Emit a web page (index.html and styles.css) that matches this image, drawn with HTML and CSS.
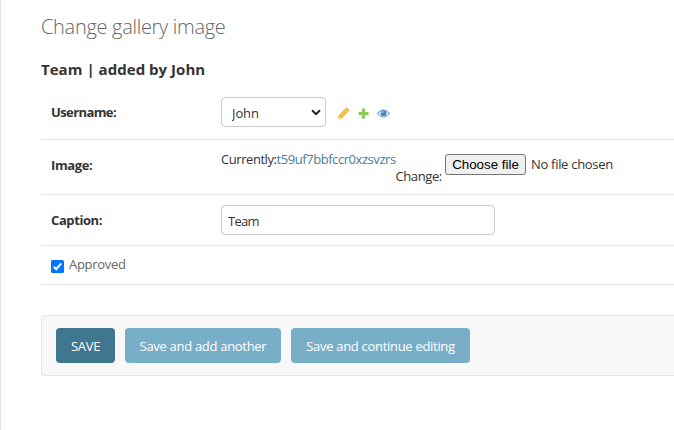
FILE: index.html
```html
<!DOCTYPE html>
<html lang="en">
<head>
<meta charset="utf-8">
<title>Change gallery image</title>
<link rel="stylesheet" href="styles.css">
</head>
<body>
<main class="content">
  <h1>Change gallery image</h1>
  <h2>Team | added by John</h2>
  <form>
    <div class="row row-user">
      <label class="name" for="user">Username:</label>
      <div class="select-box">
        <select id="user"><option>John</option></select>
        <svg class="arrow" width="10" height="7" viewBox="0 0 10 7"><path d="M1 1.2 5 5.2 9 1.2" fill="none" stroke="#222" stroke-width="2"/></svg>
      </div>
      <div class="related">
        <svg width="13" height="13" viewBox="0 0 13 13"><path d="M.8 12.200 1.800 8 8.600 1.300Q9.800.3 10.900 1.300L11.800 2.200Q12.700 3.200 11.700 4.300L5 11.100Z" fill="#efb83c"/><path d="M3.800 8.800 9 3.600" stroke="#f8d88a" stroke-width=".9"/><path d="M8.200 2.500 10.600 4.900" stroke="#fbe8bb" stroke-width=".7"/><path d="M2 10 3.100 11" stroke="#fff" stroke-width="1"/></svg>
        <svg width="13" height="13" viewBox="0 0 13 13"><path d="M5 1.500H8V5H11.500V8H8V11.500H5V8H1.500V5H5Z" fill="#8acb55"/></svg>
        <svg width="13" height="13" viewBox="0 0 13 13"><path d="M.5 6.500Q6.500-.5 12.500 6.500Q6.500 13.500.5 6.500Z" fill="#fff" stroke="#6a9bd0" stroke-width="1.100"/><circle cx="6.500" cy="6.200" r="3" fill="#4a85c8"/><path d="M5 6Q5 4.700 6.500 4.700" fill="none" stroke="#fff" stroke-width=".8"/></svg>
      </div>
    </div>
    <div class="row row-image">
      <span class="name">Image:</span>
      <div class="file">
        <span class="current">Currently:<a href="#">t59uf7bbfccr0xzsvzrs</a></span>
        <span class="change">Change:</span>
        <button type="button" class="choose">Choose file</button>
        <span class="none">No file chosen</span>
      </div>
    </div>
    <div class="row row-caption">
      <label class="name" for="caption">Caption:</label>
      <input id="caption" class="text" type="text" value="Team">
    </div>
    <div class="row row-approved">
      <svg class="check" width="13" height="13" viewBox="0 0 13 13"><rect width="13" height="13" rx="1.500" fill="#0075ff"/><path d="M2.800 6.800 5.200 9.200 10.200 3.300" fill="none" stroke="#fff" stroke-width="2"/></svg>
      <span class="approved">Approved</span>
    </div>
    <div class="submit">
      <button type="button" class="btn save">SAVE</button>
      <button type="button" class="btn another">Save and add another</button>
      <button type="button" class="btn continue">Save and continue editing</button>
    </div>
  </form>
</main>
</body>
</html>
```
FILE: styles.css
```css
* { box-sizing: border-box; }
body {
  margin: 0;
  height: 430px;
  overflow: hidden;
  background: #fff;
  color: #333;
  font: 13px/18px "Open Sans", "Noto Sans", sans-serif;
  white-space: nowrap;
}
.content {
  height: 430px;
  padding: 14px 0 0 40px;
  border-left: 1px solid #e6e6e6;
}
h1 {
  margin: 0 0 20px;
  font-size: 20px;
  line-height: 25px;
  font-weight: 300;
  letter-spacing: -0.3px;
  color: #666;
}
h2 {
  margin: 0 0 7px;
  font-size: 15px;
  line-height: 21px;
  font-weight: 700;
  letter-spacing: 0.03px;
}
.row {
  display: flex;
  align-items: flex-start;
  padding: 10px 0 0 10px;
  border-bottom: 1px solid #e6e6e6;
}
.row-user { height: 53px; }
.row-image { height: 55px; }
.row-caption { height: 51px; }
.row-approved { height: 39px; }
.name {
  width: 170px;
  padding-top: 6px;
  font-weight: 700;
  letter-spacing: -0.6px;
}
.row-caption .name { letter-spacing: -0.4px; }
.select-box { position: relative; }
select {
  display: block;
  appearance: none;
  width: 105px;
  height: 30px;
  padding: 1px 10px 0;
  border: 1px solid #ccc;
  border-radius: 4px;
  background: #fff;
  color: #333;
  font: 13px "Open Sans", sans-serif;
  letter-spacing: -0.1px;
}
.arrow { position: absolute; right: 5px; top: 12px; }
.related { display: flex; gap: 7px; padding: 10px 0 0 11px; }
.file { display: flex; align-items: flex-start; }
.current { letter-spacing: -0.44px; width: 174.500px; }
a { color: #447e9b; text-decoration: none; }
.row-image .name { letter-spacing: -0.4px; }
.change { padding-top: 17px; width: 49.500px; letter-spacing: -0.4px; }
.choose {
  width: 81px;
  height: 21px;
  margin: 4px 5px 0 0;
  padding: 0;
  border: 1px solid #767676;
  border-radius: 3px;
  background: #efefef;
  color: #000;
  font: 13.333px "Liberation Sans", sans-serif;
}
.file .none { padding-top: 5px; letter-spacing: -0.3px; }
.text {
  width: 274px;
  height: 30px;
  padding: 1px 6px 0;
  border: 1px solid #ccc;
  border-radius: 4px;
  color: #333;
  font: 13px "Open Sans", sans-serif;
  letter-spacing: -0.7px;
}
.check { margin: 4px 5px 0 0; }
.approved { margin-top: -1px; color: #666; letter-spacing: -0.3px; }
.submit {
  display: flex;
  gap: 10px;
  height: 61px;
  margin-top: 30px;
  padding: 12px 14px;
  border: 1px solid #e6e6e6;
  border-right: 0;
  border-radius: 4px 0 0 4px;
  background: #f8f8f8;
}
.btn {
  height: 35px;
  padding: 1px 0 0;
  border: 0;
  border-radius: 4px;
  background: #79aec8;
  color: #fff;
  font: 13px "Open Sans", sans-serif;
  letter-spacing: -0.3px;
}
.save { width: 59px; background: #417690; }
.another { width: 156px; }
.continue { width: 179px; }
```
